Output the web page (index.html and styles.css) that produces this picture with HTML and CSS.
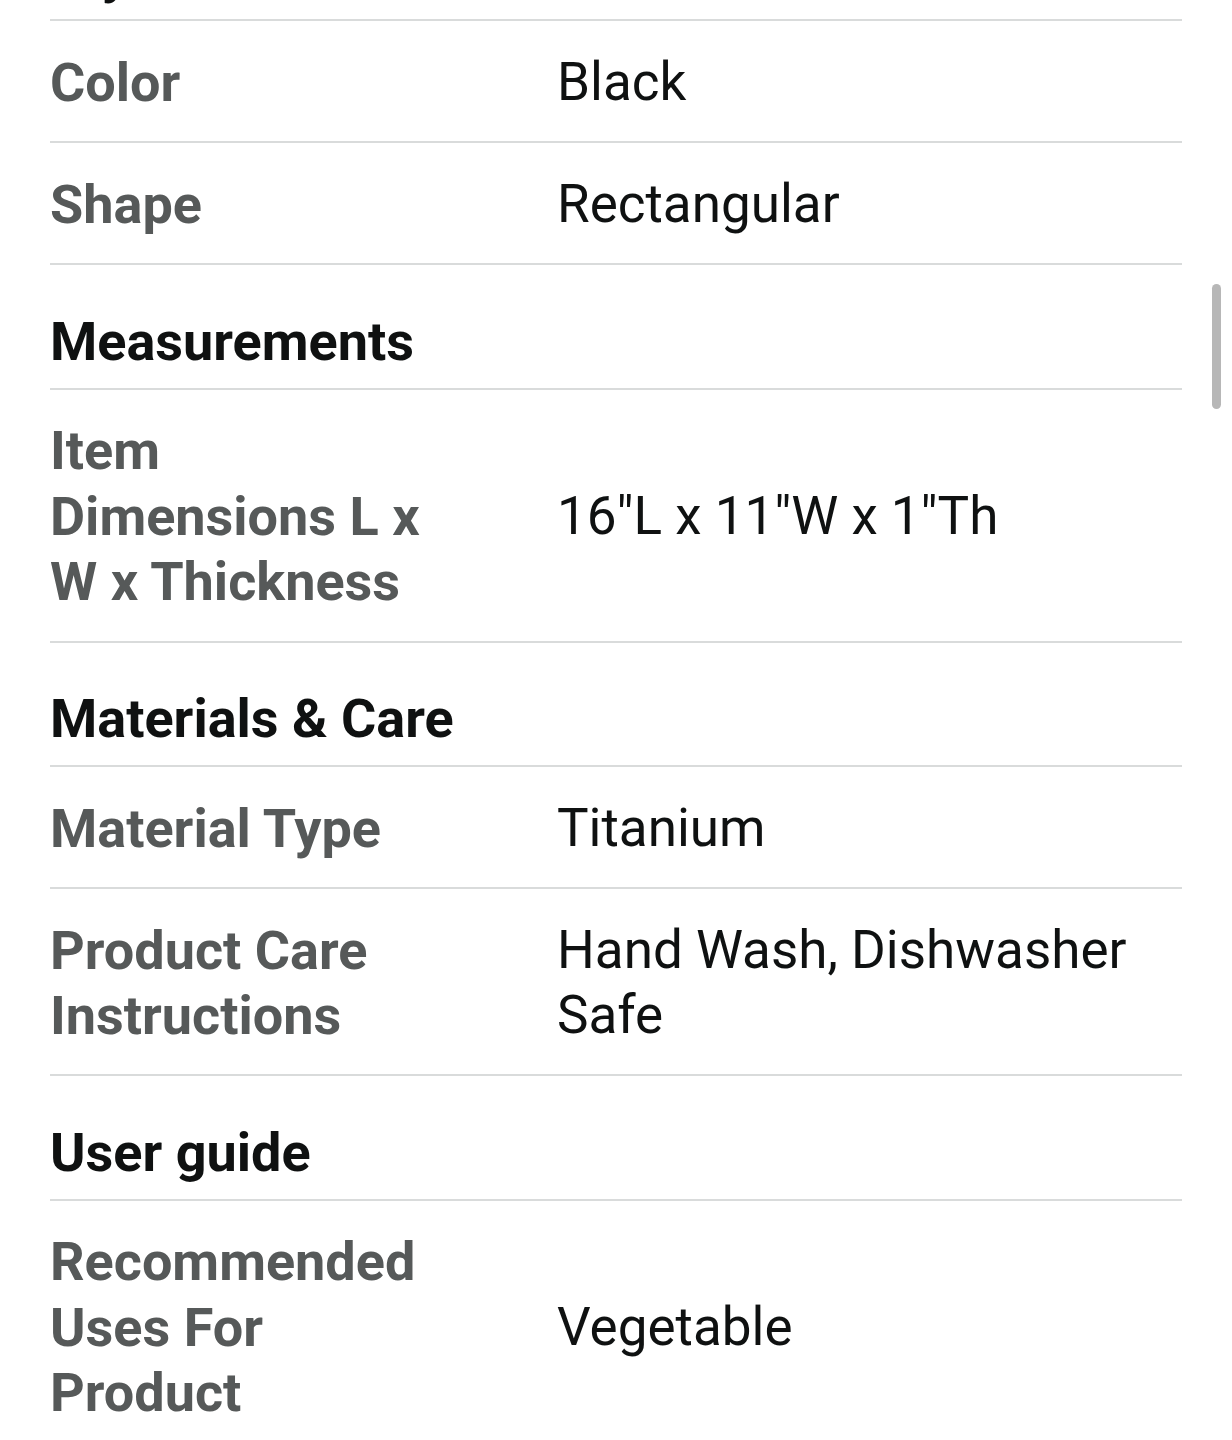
FILE: index.html
```html
<!DOCTYPE html>
<html lang="en">
<head>
<meta charset="utf-8">
<title>Product details</title>
<link rel="stylesheet" href="styles.css">
</head>
<body>
<div class="page">
  <div class="specs">
    <div class="section-title">Style</div>
    <div class="row"><div class="label">Color</div><div class="value">Black</div></div>
    <div class="row"><div class="label">Shape</div><div class="value">Rectangular</div></div>
    <div class="section-title">Measurements</div>
    <div class="row"><div class="label">Item Dimensions L x W x Thickness</div><div class="value">16"L x 11"W x 1"Th</div></div>
    <div class="section-title">Materials &amp; Care</div>
    <div class="row"><div class="label">Material Type</div><div class="value">Titanium</div></div>
    <div class="row"><div class="label">Product Care Instructions</div><div class="value">Hand Wash, Dishwasher Safe</div></div>
    <div class="section-title">User guide</div>
    <div class="row"><div class="label">Recommended Uses For Product</div><div class="value">Vegetable</div></div>
  </div>
  <div class="scrollbar"></div>
</div>
</body>
</html>
```
FILE: styles.css
```css
html, body {
  margin: 0;
  padding: 0;
  background: #ffffff;
  overflow: hidden;
}
body {
  font-family: Roboto, "Open Sans", sans-serif;
  font-size: 53px;
  color: #0f1111;
}
.page {
  position: relative;
  height: 1440px;
  overflow: hidden;
}
.specs {
  margin: -103px 50px 0 50px;
  width: 1132px;
}
.section-title {
  font-size: 54px;
  font-weight: 700;
  line-height: 65.5px;
  padding: 43.75px 0 13px 0;
  border-bottom: 2px solid #d9dbdb;
  color: #0f1111;
}
.row {
  display: grid;
  grid-template-columns: 507px 1fr;
  align-items: center;
  padding: 28.75px 0 25.75px 0;
  line-height: 65.5px;
  border-bottom: 2px solid #d9dbdb;
}
.label {
  font-size: 54px;
  font-weight: 700;
  color: #565959;
  max-width: 395px;
}
.value {
  color: #0f1111;
}
.scrollbar {
  position: absolute;
  left: 1212px;
  top: 284px;
  width: 9px;
  height: 125px;
  border-radius: 5px;
  background: #b7b7b7;
}
```
